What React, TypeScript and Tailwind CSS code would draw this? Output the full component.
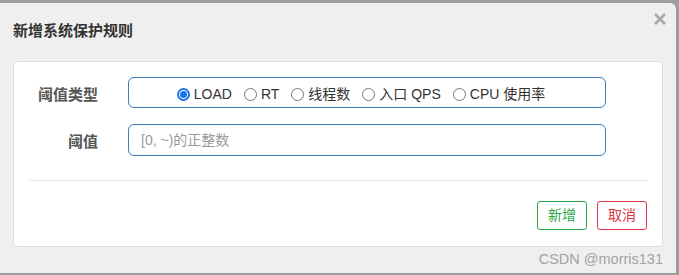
const options = ['LOAD', 'RT', '线程数', '入口 QPS', 'CPU 使用率'];

function Radio({ checked }: { checked?: boolean }) {
  return checked ? (
    <span className="w-[13px] h-[13px] rounded-full border-2 border-[#1a73e8] bg-white flex items-center justify-center shrink-0">
      <span className="w-[7px] h-[7px] rounded-full bg-[#1a73e8]" />
    </span>
  ) : (
    <span className="w-[13px] h-[13px] rounded-full border border-[#767676] bg-white shrink-0" />
  );
}

export default function App() {
  return (
    <div
      className="w-[679px] h-[275px] bg-[#9d9d9d] pt-[3px] pr-[3px] pb-[2px] overflow-hidden"
      style={{ fontFamily: '"Liberation Sans", Arial, "Noto Sans CJK SC", sans-serif' }}
    >
      <div className="relative h-full bg-[#efefef] rounded-tr-[6px] flex flex-col">
        {/* header */}
        <div className="h-[58px] pl-[13px] pt-[18px]">
          <h2 className="text-[15px] leading-[20px] font-bold text-[#333]">新增系统保护规则</h2>
        </div>
        <button className="absolute top-[10px] right-[10px] w-[12px] h-[12px]">
          <svg viewBox="0 0 12 12" className="w-[12px] h-[12px]">
            <path d="M1 1L11 11M11 1L1 11" stroke="#a8a8a8" strokeWidth="2.6" strokeLinecap="butt" />
          </svg>
        </button>

        {/* card */}
        <div className="mx-[13px] h-[186px] bg-white border border-[#dcdcdc] rounded-[4px] px-[15px] pt-[15px]">
          <div className="flex items-center">
            <label className="w-[69px] text-right text-[15px] leading-[20px] font-semibold text-[#555] mt-[4px]">阈值类型</label>
            <div className="ml-[30px] w-[478px] h-[31px] border border-[#3c7dbd] rounded-[6px] flex items-center justify-center text-[14px] text-[#333]">
              <div className="flex items-center gap-[12px] mt-[4px] -ml-[12px]">
                {options.map((o, i) => (
                  <span key={o} className="flex items-center gap-[4px]">
                    <Radio checked={i === 0} />
                    <span>{o}</span>
                  </span>
                ))}
              </div>
            </div>
          </div>
          <div className="flex items-center mt-[16px]">
            <label className="w-[69px] text-right text-[15px] leading-[20px] font-semibold text-[#555] mt-[4px]">阈值</label>
            <div className="ml-[30px] w-[478px] h-[32px] border border-[#3c7dbd] rounded-[6px] flex items-center pl-[12px] text-[14px] text-[#999]">
              [0, ~)的正整数
            </div>
          </div>
          <div className="mt-[24px] border-t border-[#e5e5e5]" />
          <div className="flex justify-end gap-[10px] mt-[20px]">
            <button className="w-[50px] h-[29px] rounded-[3px] border border-[#28a745] text-[#28a745] text-[14px] bg-white">新增</button>
            <button className="w-[50px] h-[29px] rounded-[3px] border border-[#dc3545] text-[#dc3545] text-[14px] bg-white">取消</button>
          </div>
        </div>

        {/* watermark */}
        <div className="flex justify-end pr-[13px] mt-[2px]">
          <span className="text-[14.5px] leading-[20px] text-[#a3a3a3]">CSDN @morris131</span>
        </div>
      </div>
    </div>
  );
}
